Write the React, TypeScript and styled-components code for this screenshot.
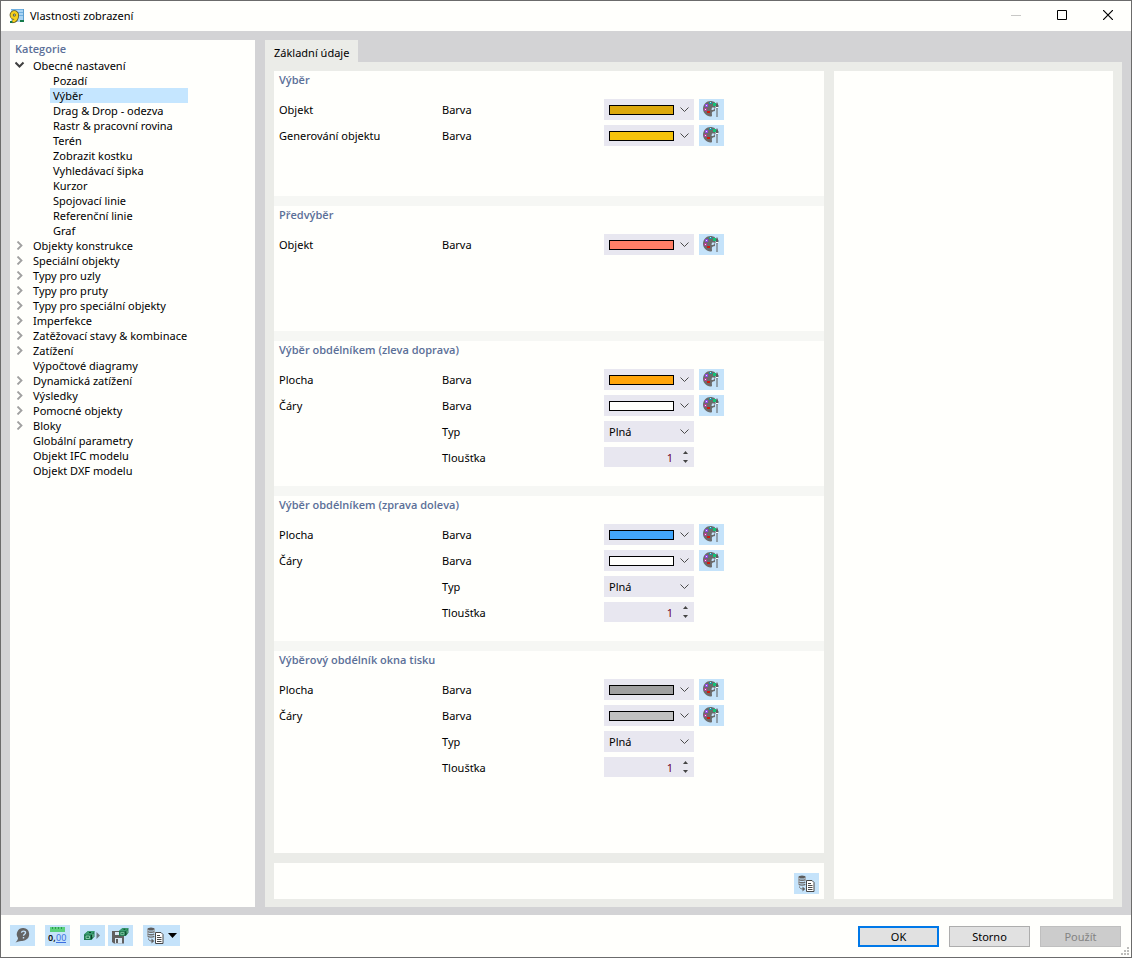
import React, { useId, useState } from "react";
import styled, { createGlobalStyle } from "styled-components";

const GlobalStyle = createGlobalStyle`
  *, *::before, *::after { box-sizing: border-box; }
  body {
    margin: 0;
    background: #fffffc;
    color: #000;
    font-family: "Noto Sans", "Open Sans", sans-serif;
    font-size: 11px;
    line-height: 15px;
  }
  button, input, select { font: inherit; color: inherit; margin: 0; }
  ul, h2 { margin: 0; padding: 0; }
`;

/* ---------- window frame ---------- */

const Window = styled.div`
  display: flex;
  flex-direction: column;
  min-height: 100vh;
  border: 1px solid #6b6b6b;
  background: #fffffc;
`;

const TitleBar = styled.header`
  display: flex;
  align-items: center;
  gap: 5px;
  height: 30px;
  padding-left: 8px;
`;

const WindowTitle = styled.span`
  flex: 1;
  padding-bottom: 2px;
`;

const CaptionButtons = styled.div`
  display: flex;
`;

const CaptionButton = styled.button`
  display: grid;
  place-items: center;
  width: 46px;
  height: 30px;
  padding: 0 0 2px;
  border: 0;
  background: none;
`;

const Body = styled.main`
  flex: 1;
  display: flex;
  gap: 10px;
  padding: 9px 9px 8px;
  background: #d3d3d5;
`;

/* ---------- category tree ---------- */

const Sidebar = styled.nav`
  flex: 0 0 245px;
  padding: 1px 5px;
  background: #fffffc;
`;

const Heading = styled.h2`
  padding-bottom: 2px;
  font-family: "Open Sans", sans-serif;
  font-size: 11px;
  line-height: 15px;
  font-weight: 600;
  color: #5b6f98;
`;

const Tree = styled.ul`
  list-style: none;
`;

const NodeRow = styled.div`
  display: flex;
  align-items: center;
  height: 15px;
`;

const Toggle = styled.button`
  display: grid;
  place-items: center;
  width: 10px;
  height: 15px;
  margin-right: 5px;
  padding: 0;
  border: 0;
  background: none;
`;

const NodeLabel = styled.button<{ $level: number; $selected: boolean }>`
  width: ${(p) => (p.$level ? "138px" : "auto")};
  height: 15px;
  margin-left: ${(p) => (p.$level ? "35px" : "0")};
  padding: 0 3px;
  border: 0;
  background: ${(p) => (p.$selected ? "#c5e6ff" : "none")};
  text-align: left;
  white-space: nowrap;
`;

const ToggleSpace = styled.span`
  width: 15px;
`;

/* ---------- right side ---------- */

const Content = styled.div`
  flex: 1;
  min-width: 0;
  display: flex;
  flex-direction: column;
`;

const TabList = styled.div`
  display: flex;
`;

const Tab = styled.button`
  height: 22px;
  padding: 3px 9px 0;
  border: 0;
  background: #ebece8;
`;

const TabPanel = styled.div`
  flex: 1;
  display: grid;
  grid-template-columns: minmax(0, 550fr) minmax(0, 279fr);
  gap: 10px;
  padding: 9px 9px 8px;
  background: #ebece8;
`;

const MainColumn = styled.div`
  display: flex;
  flex-direction: column;
  gap: 10px;
`;

const Sections = styled.div`
  flex: 1;
  display: flex;
  flex-direction: column;
  gap: 10px;
  background: #f6f7f4;
`;

const SectionBox = styled.section<{ $grow: boolean }>`
  flex: ${(p) => (p.$grow ? "1" : "none")};
  min-height: 125px;
  padding: 1px 5px 18px;
  background: #fffffc;
`;

const Rows = styled.div`
  display: grid;
  gap: 5px;
  margin-top: 10px;
`;

const Row = styled.div`
  display: grid;
  grid-template-columns: 163px 162px 90px 30px;
  align-items: center;
  height: 21px;
`;

const ActionCell = styled.div`
  margin-left: 5px;
`;

const Field = styled.div`
  display: grid;
  grid-template-columns: 1fr 19px;
  align-items: center;
  height: 21px;
  background: #e8e7f0;

  > * { grid-row: 1; }
`;

const Select = styled.select`
  grid-column: 1 / -1;
  width: 100%;
  height: 21px;
  padding: 0 5px;
  border: 0;
  border-radius: 0;
  appearance: none;
  background: transparent;
`;

const Swatch = styled.span<{ $color: string }>`
  grid-column: 1;
  height: 10px;
  margin: 0 1px 0 5px;
  border: 1px solid #000;
  background: ${(p) => p.$color};
  pointer-events: none;
`;

const Arrow = styled.svg`
  grid-column: 2;
  justify-self: center;
  pointer-events: none;
`;

const SpinField = styled(Field)`
  align-self: start;
  grid-template-columns: 1fr 17px;
  height: 20px;
`;

const NumberInput = styled.input`
  width: 100%;
  height: 20px;
  padding: 0 4px;
  border: 0;
  background: transparent;
  color: #6c0030;
  text-align: right;
  appearance: textfield;

  &::-webkit-inner-spin-button { appearance: none; margin: 0; }
`;

const SpinButtons = styled.div`
  display: grid;
  justify-items: center;
`;

const SpinButton = styled.button`
  display: grid;
  place-items: center;
  width: 15px;
  height: 9px;
  padding: 0;
  border: 0;
  background: none;
`;

const ToolButton = styled.button<{ $wide?: boolean }>`
  display: flex;
  align-items: center;
  justify-content: center;
  gap: 4px;
  width: ${(p) => (p.$wide ? "37px" : "25px")};
  height: 21px;
  padding: 0;
  border: 0;
  background: #c5e3fa;
`;

const ActionBar = styled.div`
  display: flex;
  justify-content: flex-end;
  align-items: flex-end;
  height: 36px;
  padding: 5px;
  background: #fffffc;
`;

const Preview = styled.aside`
  background: #fffffc;
`;

/* ---------- footer ---------- */

const FooterWrap = styled.div`
  position: relative;
`;

const Footer = styled.footer`
  display: flex;
  justify-content: space-between;
  align-items: flex-start;
  height: 42px;
  padding: 10px 10px 0 9px;
`;

const Tools = styled.div`
  display: flex;
  gap: 10px;
`;

const ToolPair = styled.div`
  display: flex;
  gap: 3px;
`;

const Actions = styled.div`
  display: flex;
  gap: 10px;
  padding-top: 1px;
`;

const DialogButton = styled.button<{ $primary?: boolean }>`
  width: 81px;
  height: 21px;
  padding: 0;
  border: ${(p) => (p.$primary ? "2px solid #0078e8" : "1px solid #adadad")};
  background: #e1e1e1;

  &:disabled {
    border-color: #bfbfbf;
    background: #cccccc;
    color: #838383;
  }
`;

const Grip = styled.svg`
  position: absolute;
  right: 2px;
  bottom: 2px;
`;

/* ---------- icons ---------- */

const AppIcon = () => (
  <svg width="16" height="16" viewBox="0 0 16 16" aria-hidden="true">
    <rect x="2" y="1" width="13" height="13" fill="#a9d4f3" />
    <path d="M2 1.500h13M2 4.500h13M10 7.500h5" stroke="#6fb0e0" />
    <path d="M14.500 1v12" stroke="#5c9fd0" />
    <path d="M11 12h4v2h-4zM1 13h4v2H1z" fill="#147a4a" />
    <path d="M8 7a2.700 2.700 0 1 0-2.700 2.700C7 9.700 8 8.500 8 7c0 3.500-1 6-4.500 6.200" fill="none" stroke="#5a5320" strokeWidth="4" />
    <path d="M8 7a2.700 2.700 0 1 0-2.700 2.700C7 9.700 8 8.500 8 7c0 3.500-1 6-4.500 6.200" fill="none" stroke="#f4cf1c" strokeWidth="2.400" />
  </svg>
);

const PaletteIcon = () => (
  <svg width="17" height="17" viewBox="0 0 17 17" aria-hidden="true">
    <path
      d="M7.500 0C3.500 0 0 3.500 0 7.800S3.500 15 7.500 15.500c1 0 1.700-.3 1.500-1.500-.2-1.500-.3-2.800.5-3.300.8-.5 1.500-.3 2.500-1V1.500C11 .5 9 0 7.500 0Z"
      fill="#6b6b6b"
    />
    <path d="M9 6.500h2.500V8L10 9H8.500Z" fill="#c5e3fa" />
    <path d="M14 1c1 1.500 1.500 3.300 1 5l-.5 2v8h-1V8L13 6c-.5-1.700 0-3.500 1-5Z" fill="#5e5e5e" />
    <path d="M13 6h2v1h-2z" fill="#fff" />
    <path d="M15 4h1v2h-1zM12 5h1v2h-1z" fill="#93a9b8" />
    <path d="M2 3h3v3H2z" fill="#8f48e0" />
    <path d="M6 1h3v2H6z" fill="#1b93a0" />
    <path d="M10 2h3v3h-3z" fill="#12c274" />
    <path d="M1 7h3v3H1z" fill="#b0408f" />
    <path d="M4 10h3v2H4z" fill="#d21a0c" />
    <path d="M3 4h1v1H3zM2 8h1v1H2z" fill="#f3e2ff" />
    <path d="M7 1h1v1H7z" fill="#b5e6ea" />
  </svg>
);

const CopyDataIcon = () => (
  <svg width="17" height="17" viewBox="0 0 17 17" aria-hidden="true">
    <ellipse cx="4" cy="2" rx="3.500" ry="1.500" fill="#5c5c5c" />
    <path d="M.8 4.500c1 1 5.400 1 6.400 0M.8 7c1 1 5.400 1 6.400 0M.8 9.300c1 1 5.400 1 6.400 0" fill="none" stroke="#6c6c6c" strokeWidth="1.300" />
    <path d="M.8 2v7.300M7.200 2v4" stroke="#999" />
    <path d="M1.500 11.500c0 2 1.500 2.500 4 2.500" fill="none" stroke="#707070" />
    <path d="M4.500 11.500 7.300 14l-2.800 2.500Z" fill="#606060" />
    <path d="M8.500 5.500h5.500l2 2v9H8.500z" fill="#fff" stroke="#484848" />
    <path d="M10 8.500h3M10 10.500h4.500M10 12.500h4.500M10 14.500h4.500" stroke="#484848" />
  </svg>
);

const HelpIcon = () => (
  <svg width="17" height="17" viewBox="0 0 17 17" aria-hidden="true">
    <path d="M9.500 1A6.300 6.300 0 0 1 11.500 13C8.500 14.500 6 13.500 1.500 15.500 3.300 13.500 4 12.500 4 11A6.300 6.300 0 0 1 9.500 1Z" fill="#646464" />
    <path d="M7.500 5.800c.2-2.200 4-2.200 4 0 0 1.500-2 1.500-2 3M9.500 10v1.500" fill="none" stroke="#c5e3fa" strokeWidth="1.400" />
  </svg>
);

const UnitsIcon = () => (
  <svg width="19" height="17" viewBox="0 0 19 17" aria-hidden="true">
    <path d="M2 0h15v5H2z" fill="#5bd07d" />
    <path d="M4.500 0v2M7.500 0v2M10.500 0v2M13.500 0v2" stroke="#2c9950" />
    <text x="0" y="14" fontSize="9" fontWeight="600" fontFamily="Noto Sans, sans-serif" fill="#111">0,</text>
    <text x="8" y="14" fontSize="9" fontFamily="Noto Sans, sans-serif" fill="#3b6fe0">00</text>
    <path d="M8 15.500h10" stroke="#3b6fe0" />
  </svg>
);

const Box3d = () => (
  <g>
    <path d="M0 4.500 4 1h6.500v5.500L7.500 10H0Z" fill="#1f7a50" />
    <path d="M0 4.500 4 1h6.500L7.500 4.500Z" fill="#3a9d70" />
    <path d="M2 6h3.500v2.500H2zM9 4v3" fill="none" stroke="#9adbb9" strokeWidth=".8" />
    <path d="M5 2.500h2M7.500 5v4" stroke="#0c3d27" />
  </g>
);

const ExportIcon = () => (
  <svg width="17" height="17" viewBox="0 0 17 17" aria-hidden="true">
    <g transform="translate(0 3)"><Box3d /></g>
    <path d="M12.500 5 16 8.500 12.500 12Z" fill="#6f7a82" />
  </svg>
);

const SaveDefaultIcon = () => (
  <svg width="17" height="17" viewBox="0 0 17 17" aria-hidden="true">
    <path d="M0 4h12v12.500H2L0 15Z" fill="#606060" />
    <path d="M3 5h5v3H3zM3 11h7v5.500H3z" fill="#d7e8f4" />
    <path d="M4 12h2v4H4z" fill="#606060" />
    <g transform="translate(7 0) scale(.9)"><Box3d /></g>
  </svg>
);

const Chevron = ({ open }: { open: boolean }) =>
  open ? (
    <svg width="10" height="9" viewBox="0 0 10 9" aria-hidden="true">
      <path d="M.5 1.500 4.500 5.500 8.500 1.500" fill="none" stroke="#404040" strokeWidth="2" />
    </svg>
  ) : (
    <svg width="8" height="9" viewBox="0 0 8 9" aria-hidden="true">
      <path d="M1.500.5 5.500 4.500 1.500 8.500" fill="none" stroke="#a0a0a0" strokeWidth="1.800" />
    </svg>
  );

const DropArrow = () => (
  <Arrow width="9" height="6" viewBox="0 0 9 6" aria-hidden="true">
    <path d="M.5.5 4.500 4.500 8.500.5" fill="none" stroke="#4a4a4a" />
  </Arrow>
);

/* ---------- parts ---------- */

function ColorField({ color, id }: { color: string; id: string }) {
  return (
    <Field>
      <Swatch $color={color} />
      <Select id={id} defaultValue={color}>
        <option value={color} aria-label={color} />
      </Select>
      <DropArrow />
    </Field>
  );
}

function LineTypeField({ id }: { id: string }) {
  return (
    <Field>
      <Select id={id} defaultValue="Plná">
        <option>Plná</option>
      </Select>
      <DropArrow />
    </Field>
  );
}

function ThicknessField({ id }: { id: string }) {
  const [value, setValue] = useState(1);
  return (
    <SpinField>
      <NumberInput id={id} type="number" min={1} value={value} onChange={(e) => setValue(Number(e.target.value))} />
      <SpinButtons>
        <SpinButton type="button" aria-label="Zvýšit" onClick={() => setValue(value + 1)}>
          <svg width="5" height="3" viewBox="0 0 5 3"><path d="M0 3 2.500 0 5 3Z" fill="#444" /></svg>
        </SpinButton>
        <SpinButton type="button" aria-label="Snížit" onClick={() => setValue(Math.max(1, value - 1))}>
          <svg width="5" height="3" viewBox="0 0 5 3"><path d="M0 0 2.500 3 5 0Z" fill="#444" /></svg>
        </SpinButton>
      </SpinButtons>
    </SpinField>
  );
}

type Setting = { name?: string; label: string; color?: string; kind?: "type" | "thickness" };

function SettingRow({ name, label, color, kind }: Setting) {
  const id = useId();
  return (
    <Row>
      <span>{name}</span>
      <label htmlFor={id}>{label}</label>
      {color && <ColorField id={id} color={color} />}
      {kind === "type" && <LineTypeField id={id} />}
      {kind === "thickness" && <ThicknessField id={id} />}
      {color && (
        <ActionCell>
          <ToolButton type="button" aria-label="Upravit barvu"><PaletteIcon /></ToolButton>
        </ActionCell>
      )}
    </Row>
  );
}

const rectangle = (area: string, lines: string): Setting[] => [
  { name: "Plocha", label: "Barva", color: area },
  { name: "Čáry", label: "Barva", color: lines },
  { label: "Typ", kind: "type" },
  { label: "Tloušťka", kind: "thickness" },
];

const sections: { title: string; rows: Setting[] }[] = [
  {
    title: "Výběr",
    rows: [
      { name: "Objekt", label: "Barva", color: "#dca80b" },
      { name: "Generování objektu", label: "Barva", color: "#f5c30b" },
    ],
  },
  { title: "Předvýběr", rows: [{ name: "Objekt", label: "Barva", color: "#ff7f66" }] },
  { title: "Výběr obdélníkem (zleva doprava)", rows: rectangle("#ffa50a", "#fffffc") },
  { title: "Výběr obdélníkem (zprava doleva)", rows: rectangle("#42a5fa", "#fffffc") },
  { title: "Výběrový obdélník okna tisku", rows: rectangle("#a0a0a0", "#c1c1c1") },
];

type Category = { name: string; children?: string[]; leaf?: boolean };

const categories: Category[] = [
  {
    name: "Obecné nastavení",
    children: [
      "Pozadí", "Výběr", "Drag & Drop - odezva", "Rastr & pracovní rovina", "Terén", "Zobrazit kostku",
      "Vyhledávací šipka", "Kurzor", "Spojovací linie", "Referenční linie", "Graf",
    ],
  },
  { name: "Objekty konstrukce" },
  { name: "Speciální objekty" },
  { name: "Typy pro uzly" },
  { name: "Typy pro pruty" },
  { name: "Typy pro speciální objekty" },
  { name: "Imperfekce" },
  { name: "Zatěžovací stavy & kombinace" },
  { name: "Zatížení" },
  { name: "Výpočtové diagramy", leaf: true },
  { name: "Dynamická zatížení" },
  { name: "Výsledky" },
  { name: "Pomocné objekty" },
  { name: "Bloky" },
  { name: "Globální parametry", leaf: true },
  { name: "Objekt IFC modelu", leaf: true },
  { name: "Objekt DXF modelu", leaf: true },
];

function CategoryTree() {
  const [selected, setSelected] = useState("Výběr");
  const [open, setOpen] = useState(true);
  return (
    <Tree>
      {categories.map(({ name, children, leaf }) => (
        <li key={name}>
          <NodeRow>
            {leaf ? (
              <ToggleSpace />
            ) : (
              <Toggle type="button" aria-label={name} aria-expanded={!!children && open} onClick={() => children && setOpen(!open)}>
                <Chevron open={!!children && open} />
              </Toggle>
            )}
            <NodeLabel type="button" $level={0} $selected={selected === name} onClick={() => setSelected(name)}>
              {name}
            </NodeLabel>
          </NodeRow>
          {children && open && (
            <Tree>
              {children.map((child) => (
                <li key={child}>
                  <NodeRow>
                    <NodeLabel type="button" $level={1} $selected={selected === child} onClick={() => setSelected(child)}>
                      {child}
                    </NodeLabel>
                  </NodeRow>
                </li>
              ))}
            </Tree>
          )}
        </li>
      ))}
    </Tree>
  );
}

export default function App() {
  return (
    <Window>
      <GlobalStyle />
      <TitleBar>
        <AppIcon />
        <WindowTitle>Vlastnosti zobrazení</WindowTitle>
        <CaptionButtons>
          <CaptionButton type="button" aria-label="Minimalizovat">
            <svg width="10" height="10" viewBox="0 0 10 10"><path d="M0 5.500h10" stroke="#c8c8c6" /></svg>
          </CaptionButton>
          <CaptionButton type="button" aria-label="Maximalizovat">
            <svg width="10" height="10" viewBox="0 0 10 10"><path d="M.5.5h9v9h-9z" fill="none" stroke="#000" /></svg>
          </CaptionButton>
          <CaptionButton type="button" aria-label="Zavřít">
            <svg width="10" height="10" viewBox="0 0 10 10"><path d="M0 0l10 10M10 0 0 10" stroke="#000" strokeWidth="1.200" /></svg>
          </CaptionButton>
        </CaptionButtons>
      </TitleBar>

      <Body>
        <Sidebar>
          <Heading>Kategorie</Heading>
          <CategoryTree />
        </Sidebar>
        <Content>
          <TabList role="tablist">
            <Tab type="button" role="tab" aria-selected>Základní údaje</Tab>
          </TabList>
          <TabPanel role="tabpanel">
            <MainColumn>
              <Sections>
                {sections.map(({ title, rows }, i) => (
                  <SectionBox key={title} $grow={i === sections.length - 1}>
                    <Heading>{title}</Heading>
                    <Rows>
                      {rows.map((row, n) => <SettingRow key={n} {...row} />)}
                    </Rows>
                  </SectionBox>
                ))}
              </Sections>
              <ActionBar>
                <ToolButton type="button" aria-label="Kopírovat nastavení"><CopyDataIcon /></ToolButton>
              </ActionBar>
            </MainColumn>
            <Preview />
          </TabPanel>
        </Content>
      </Body>

      <FooterWrap>
        <Footer>
          <Tools>
            <ToolButton type="button" aria-label="Nápověda"><HelpIcon /></ToolButton>
            <ToolButton type="button" aria-label="Jednotky"><UnitsIcon /></ToolButton>
            <ToolPair>
              <ToolButton type="button" aria-label="Výchozí nastavení"><ExportIcon /></ToolButton>
              <ToolButton type="button" aria-label="Uložit jako výchozí"><SaveDefaultIcon /></ToolButton>
            </ToolPair>
            <ToolButton type="button" $wide aria-label="Kopírovat">
              <CopyDataIcon />
              <svg width="9" height="5" viewBox="0 0 9 5"><path d="M0 0h9L4.500 5Z" fill="#000" /></svg>
            </ToolButton>
          </Tools>
          <Actions>
            <DialogButton type="button" $primary>OK</DialogButton>
            <DialogButton type="button">Storno</DialogButton>
            <DialogButton type="button" disabled>Použít</DialogButton>
          </Actions>
        </Footer>
        <Grip width="8" height="8" viewBox="0 0 8 8" aria-hidden="true">
          <path d="M6 0h2v2H6zM3 3h2v2H3zM6 3h2v2H6zM0 6h2v2H0zM3 6h2v2H3zM6 6h2v2H6z" fill="#bdbdbb" />
        </Grip>
      </FooterWrap>
    </Window>
  );
}
